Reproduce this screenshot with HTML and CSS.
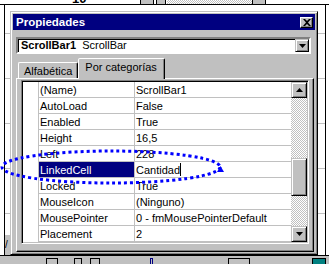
FILE: index.html
```html
<!DOCTYPE html>
<html lang="es">
<head>
    <meta charset="UTF-8">
    <title>Propiedades</title>
    <link rel="stylesheet" href="styles.css">
</head>
<body>
    <div class="screen">
        <!-- hoja de Excel detras del cuadro -->
        <div class="xl-top">
            <span class="xl-num">10</span>
            <span class="xl-box b1"></span>
            <span class="xl-box b2"></span>
            <span class="xl-dither"></span>
            <span class="xl-box b3"></span>
        </div>
        <div class="xl-body">
            <div class="xl-left">
                <div class="xl-cells"></div>
                <div class="xl-tabnav">/</div>
            </div>
            <div class="xl-mid"></div>
            <div class="xl-right xl-cells"></div>
        </div>
        <div class="xl-toolbar">
            <span class="tb t1"></span>
            <span class="tb t2"></span>
            <span class="tb t3"></span>
            <span class="tb t4"></span>
            <span class="tb t5"></span>
            <span class="tb t6"></span>
        </div>

        <!-- ventana Propiedades -->
        <div class="dialog">
            <div class="titlebar">
                <span class="title">Propiedades</span>
                <span class="close-btn">
                    <svg width="8" height="7" viewBox="0 0 8 7"><path d="M0 0h2l2 2 2-2h2L5 3.5 8 7H6L4 5 2 7H0l3-3.5z" fill="#000"/></svg>
                </span>
            </div>
            <div class="combo">
                <span class="combo-text"><b>ScrollBar1</b>&nbsp; ScrollBar</span>
                <span class="combo-btn">
                    <svg width="7" height="4" viewBox="0 0 7 4"><path d="M0 0h7L3.5 4z" fill="#000"/></svg>
                </span>
            </div>
            <div class="tabs">
                <span class="tab">Alfabética</span>
                <span class="tab active">Por categorías</span>
            </div>
            <div class="panel">
                <div class="grid">
                    <div class="gutter"></div>
                    <div class="rows">
                        <div class="row"><span class="name">(Name)</span><span class="value">ScrollBar1</span></div>
                        <div class="row"><span class="name">AutoLoad</span><span class="value">False</span></div>
                        <div class="row"><span class="name">Enabled</span><span class="value">True</span></div>
                        <div class="row"><span class="name">Height</span><span class="value">16,5</span></div>
                        <div class="row"><span class="name">Left</span><span class="value">228</span></div>
                        <div class="row selected"><span class="name">LinkedCell</span><span class="value">Cantidad<i class="caret"></i></span></div>
                        <div class="row"><span class="name">Locked</span><span class="value">True</span></div>
                        <div class="row"><span class="name">MouseIcon</span><span class="value">(Ninguno)</span></div>
                        <div class="row"><span class="name">MousePointer</span><span class="value">0 - fmMousePointerDefault</span></div>
                        <div class="row"><span class="name">Placement</span><span class="value">2</span></div>
                    </div>
                    <div class="scrollbar">
                        <span class="sb-btn">
                            <svg width="7" height="4" viewBox="0 0 7 4"><path d="M3.5 0L7 4H0z" fill="#000"/></svg>
                        </span>
                        <div class="sb-track">
                            <span class="sb-thumb"></span>
                        </div>
                        <span class="sb-btn">
                            <svg width="7" height="4" viewBox="0 0 7 4"><path d="M0 0h7L3.5 4z" fill="#000"/></svg>
                        </span>
                    </div>
                </div>
            </div>
        </div>

        <!-- marca punteada azul -->
        <svg class="mark" width="232" height="44" viewBox="0 0 232 44">
            <ellipse cx="111" cy="22" rx="109" ry="16" fill="none" stroke="#0000ff" stroke-width="3" stroke-dasharray="3 3"/>
            <path d="M217 27l3.5-6 3.5 6z" fill="#0000ff"/>
        </svg>
    </div>
</body>
</html>
```

FILE: styles.css
```css
body {
    margin: 0;
    background: #fff;
    font-family: 'Liberation Sans', Arial, sans-serif;
    font-size: 11px;
    color: #000;
}
.screen {
    position: relative;
    width: 329px;
    height: 264px;
    overflow: hidden;
    background: #fff;
}

/* hoja de Excel */
.xl-top {
    position: relative;
    height: 4px;
    overflow: hidden;
}
.xl-num {
    position: absolute;
    left: 72px;
    top: -9px;
    font-weight: bold;
    font-size: 13px;
}
.xl-box {
    position: absolute;
    top: 0;
    height: 4px;
    background: #c0c0c0;
    border-left: 1px solid #000;
    border-right: 1px solid #000;
}
.b1 { left: 140px; width: 12px; }
.b2 { left: 156px; width: 8px; }
.b3 { left: 252px; width: 12px; }
.xl-dither {
    position: absolute;
    left: 167px;
    top: 0;
    width: 85px;
    height: 4px;
    background: repeating-conic-gradient(#c0c0c0 0 25%, #fff 0 50%) 0 0 / 2px 2px;
}
.xl-body {
    display: flex;
    height: 250px;
    border-top: 1px solid #000;
    border-bottom: 1px solid #000;
}
.xl-left {
    width: 6px;
    margin-left: 4px;
    border-left: 1px solid #000;
    display: flex;
    flex-direction: column;
}
.xl-left .xl-cells {
    flex: 1;
}
.xl-cells {
    background: repeating-linear-gradient(to bottom, transparent 0 28px, #c0c0c0 28px 29px, transparent 29px 45px);
}
.xl-tabnav {
    height: 20px;
    background: #c0c0c0;
    font-size: 10px;
    line-height: 20px;
    color: #000;
    overflow: hidden;
}
.xl-mid {
    flex: 1;
}
.xl-right {
    width: 9px;
    border-right: 1px solid #000;
    margin-right: 3px;
}
.xl-toolbar {
    position: relative;
    height: 8px;
    background: #c0c0c0;
}
.tb {
    position: absolute;
    top: 2px;
    height: 6px;
    border: 1px solid #000;
    border-bottom: none;
}
.t1 { left: 46px; width: 10px; }
.t2 { left: 74px; width: 6px; }
.t3 { left: 90px; width: 8px; }
.t4 { left: 150px; width: 1px; border-color: #000080; }
.t5 { left: 228px; width: 20px; }
.t6 { left: 312px; width: 12px; background: #008080; }

/* ventana */
.dialog {
    position: absolute;
    left: 10px;
    top: 11px;
    width: 302px;
    height: 238px;
    padding: 2px;
    background: #c0c0c0;
    border: 1px solid;
    border-color: #c0c0c0 #000 #000 #c0c0c0;
    box-shadow: inset 1px 1px #fff, inset -1px -1px #808080;
    display: flex;
    flex-direction: column;
}
.titlebar {
    height: 16px;
    background: #000080;
    display: flex;
    align-items: center;
    justify-content: space-between;
    padding: 0 2px 0 3px;
}
.title {
    color: #fff;
    font-weight: bold;
    font-size: 11.5px;
}
.close-btn {
    width: 13px;
    height: 11px;
    background: #c0c0c0;
    border: 1px solid;
    border-color: #fff #000 #000 #fff;
    box-shadow: inset -1px -1px #808080;
    display: flex;
    align-items: center;
    justify-content: center;
    box-sizing: border-box;
}
.combo {
    margin: 7px 4px 0 3px;
    height: 13px;
    background: #fff;
    border: 2px solid;
    border-color: #808080 #fff #fff #808080;
    box-shadow: inset 1px 1px #000;
    display: flex;
    align-items: center;
    justify-content: space-between;
}
.combo-text {
    padding-left: 3px;
    line-height: 13px;
}
.combo-btn {
    width: 14px;
    height: 13px;
    box-sizing: border-box;
    background: #c0c0c0;
    border: 1px solid;
    border-color: #c0c0c0 #000 #000 #c0c0c0;
    box-shadow: inset 1px 1px #fff, inset -1px -1px #808080;
    display: flex;
    align-items: center;
    justify-content: center;
}
.tabs {
    margin: 3px 0 0 5px;
    height: 21px;
    display: flex;
    align-items: flex-end;
    position: relative;
    z-index: 1;
}
.tab {
    height: 15px;
    padding: 0 5px;
    line-height: 16px;
    border: 1px solid;
    border-bottom: none;
    border-color: #fff #000 transparent #fff;
    border-radius: 2px 2px 0 0;
    box-shadow: inset -1px 0 #808080;
}
.tab.active {
    height: 20px;
    padding: 0 7px 0 6px;
    line-height: 17px;
    background: #c0c0c0;
    margin-bottom: -1px;
}
.panel {
    flex: 1;
    margin: 0 1px 0 3px;
    border: 1px solid;
    border-color: #fff #000 #000 #fff;
    box-shadow: inset -1px -1px #808080;
    padding: 1px 4px 0 4px;
}
.grid {
    display: flex;
    height: 160px;
    border: 1px solid;
    border-color: #808080 #fff #fff #808080;
    box-shadow: inset 1px 1px #000, inset -1px -1px #c0c0c0;
    padding: 1px;
    background: #fff;
}
.gutter {
    width: 15px;
    border-right: 1px solid #c0c0c0;
}
.rows {
    flex: 1;
}
.row {
    display: flex;
    height: 15px;
    border-bottom: 1px solid #c0c0c0;
    line-height: 16px;
}
.name {
    width: 94px;
    padding-left: 1px;
    border-right: 1px solid #c0c0c0;
    white-space: nowrap;
}
.value {
    flex: 1;
    padding-left: 1px;
    white-space: nowrap;
    overflow: hidden;
}
.row.selected .name {
    background: #000080;
    color: #fff;
}
.caret {
    display: inline-block;
    width: 1px;
    height: 13px;
    background: #000;
    vertical-align: -2px;
}
.scrollbar {
    width: 16px;
    display: flex;
    flex-direction: column;
}
.sb-btn,
.sb-thumb {
    display: flex;
    align-items: center;
    justify-content: center;
    box-sizing: border-box;
    width: 16px;
    height: 16px;
    background: #c0c0c0;
    border: 1px solid;
    border-color: #c0c0c0 #000 #000 #c0c0c0;
    box-shadow: inset 1px 1px #fff, inset -1px -1px #808080;
}
.sb-track {
    flex: 1;
    background: repeating-conic-gradient(#c0c0c0 0 25%, #fff 0 50%) 0 0 / 2px 2px;
}
.sb-thumb {
    height: 38px;
    margin-top: 60px;
}

/* marca azul */
.mark {
    position: absolute;
    left: 0;
    top: 145px;
}
```
